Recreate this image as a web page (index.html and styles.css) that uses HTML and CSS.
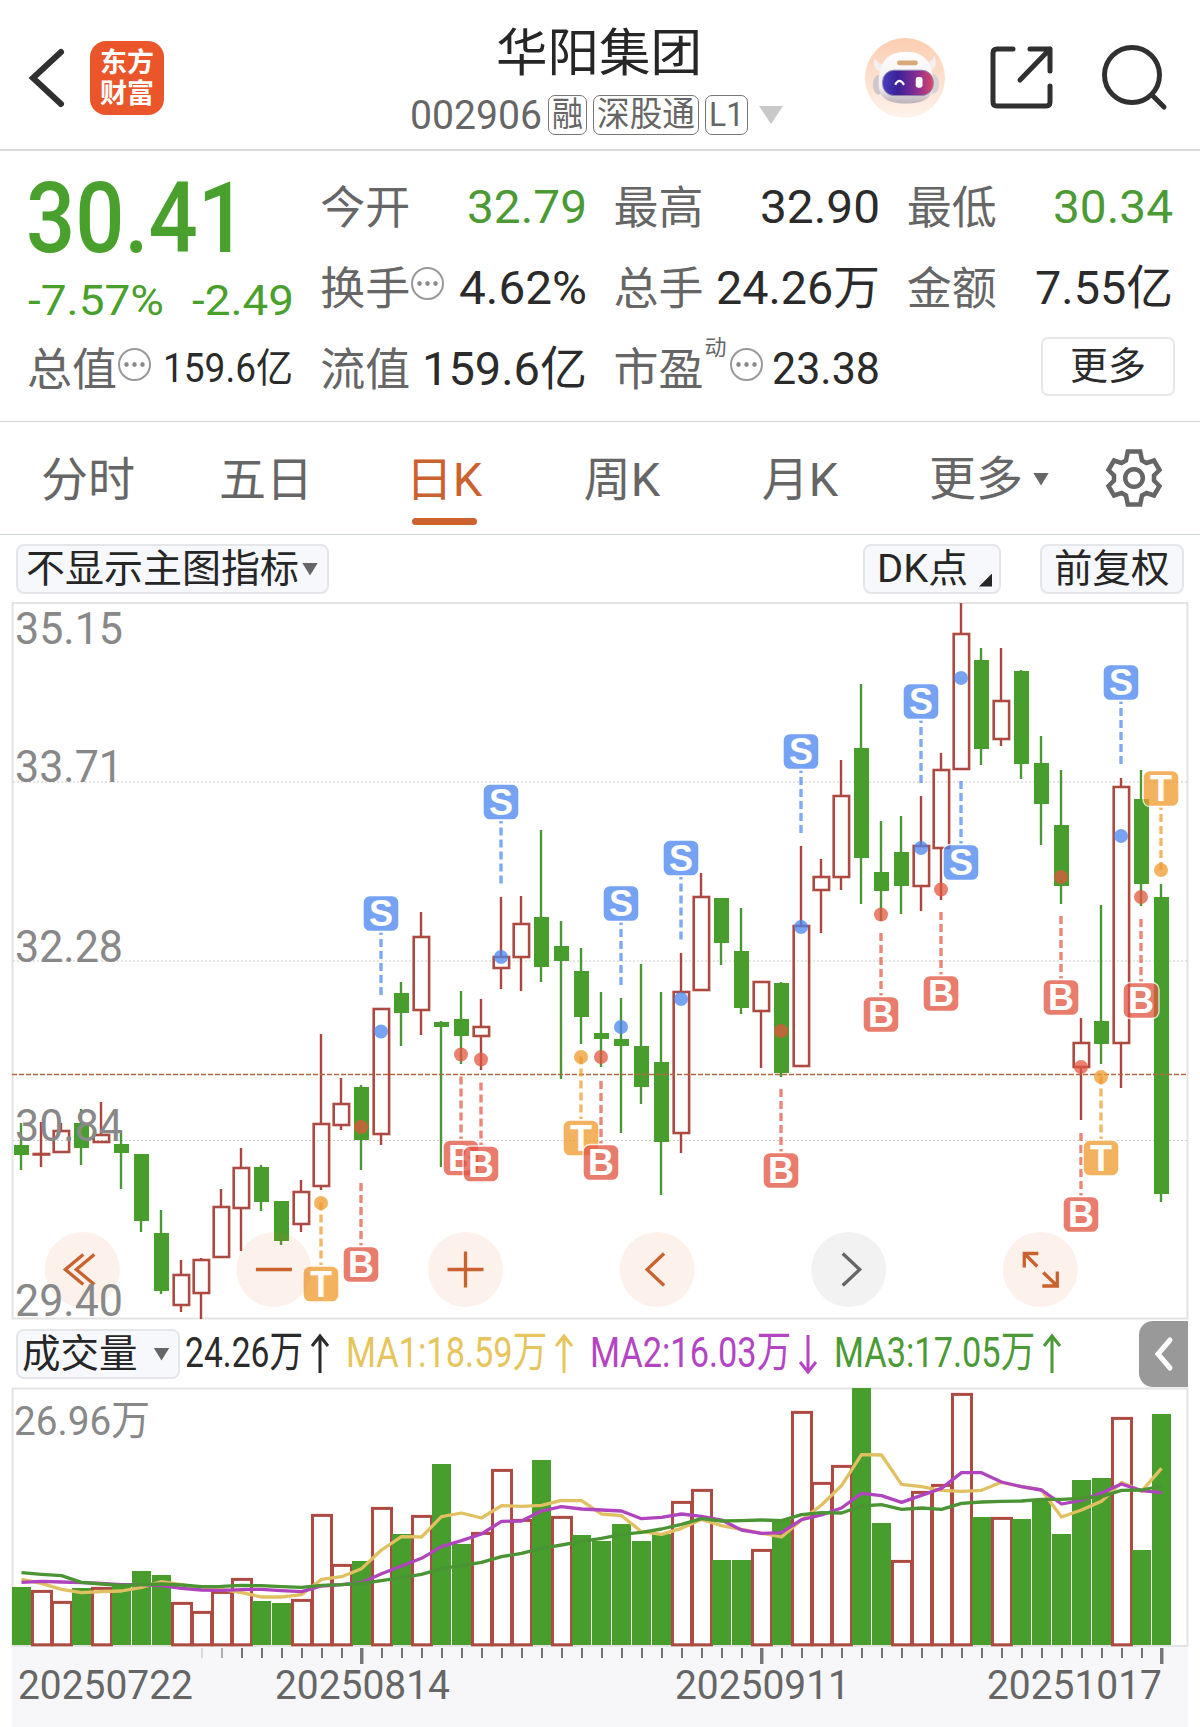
FILE: index.html
```html
<!DOCTYPE html>
<html lang="zh-CN">
  <head>
    <meta charset="UTF-8" />
    <meta name="viewport" content="width=device-width, initial-scale=1.0" />
    <title>华阳集团 002906</title>
    <link rel="stylesheet" href="styles.css">
  </head>
  <body>
    <header>
      <svg class="tilbage" width="40" height="64" viewBox="0 0 40 64"><path d="M34 6 L6 32 L34 58" /></svg>
      <div class="logo"><span>东方</span><span>财富</span></div>
      <div class="titel">
        <h1>华阳集团</h1>
        <div class="kode">
          <span class="fit nummer" data-w="132">002906</span>
          <span class="tag"><span class="fit" data-w="31">融</span></span>
          <span class="tag"><span class="fit" data-w="98">深股通</span></span>
          <span class="tag"><span class="fit" data-w="35">L1</span></span>
          <i class="pil lys"></i>
        </div>
      </div>
      <div class="ikoner">
        <svg width="82" height="82" viewBox="0 0 82 84">
          <defs>
            <linearGradient id="bg" x1="0" y1="0" x2="0" y2="1">
              <stop offset="0" stop-color="#fbcdb0" />
              <stop offset="1" stop-color="#fef3ec" />
            </linearGradient>
            <linearGradient id="visir" x1="0" y1="0" x2="1" y2="0">
              <stop offset="0" stop-color="#4a3fc0" />
              <stop offset="0.3" stop-color="#392196" />
              <stop offset="0.7" stop-color="#8d2f93" />
              <stop offset="1" stop-color="#dc4663" />
            </linearGradient>
            <linearGradient id="hjelm" x1="0" y1="0" x2="0" y2="1">
              <stop offset="0" stop-color="#ffffff" />
              <stop offset="0.7" stop-color="#f1edef" />
              <stop offset="1" stop-color="#b9b2b8" />
            </linearGradient>
          </defs>
          <circle cx="41" cy="42" r="41" fill="url(#bg)" />
          <path d="M10 21 Q7 34 16 35 L21 28 Q12 28 10 21 Z M71 19 Q76 32 66 35 L60 27 Q69 27 71 19 Z" fill="#f6eeee" />
          <ellipse cx="14" cy="49" rx="6" ry="10" fill="#cfc7cb" />
          <ellipse cx="70" cy="48" rx="6" ry="10" fill="#d9d2d5" />
          <path d="M14 47 C14 26 23 15 42 15 C61 15 69 26 70 46 C70 62 62 68 42 68 C22 68 14 62 14 47 Z" fill="url(#hjelm)" />
          <rect x="33" y="24" width="21" height="5" rx="2" fill="#d9a877" />
          <rect x="18" y="34" width="52" height="26" rx="12" fill="url(#visir)" stroke="#8e86ad" />
          <path d="M31 49 Q35 41 40 49" fill="none" stroke="#fff" stroke-width="2.2" />
          <rect x="52" y="41" width="7" height="11" rx="2.5" fill="#fff" />
        </svg>
        <svg class="streg" width="66" height="66" viewBox="0 0 66 66">
          <path d="M24 4 H8 Q4 4 4 8 V57 Q4 61 8 61 H57 Q61 61 61 57 V41" />
          <path d="M41 4 H61 V26 M61 4 L31 35" />
        </svg>
        <svg class="streg" width="68" height="68" viewBox="0 0 68 68">
          <circle cx="33" cy="32" r="27.5" />
          <path d="M53 52 L65 64" />
        </svg>
      </div>
    </header>

    <section class="kurs">
      <div class="pris">
        <div class="stor"><span class="fit" data-w="221">30.41</span></div>
        <div class="fald"><span class="fit" data-w="136">-7.57%</span><span class="fit" data-w="102">-2.49</span></div>
      </div>
      <div class="felt"><label>今开</label><b class="fit groen" data-w="120">32.79</b></div>
      <div class="felt"><label>最高</label><b class="fit" data-w="120">32.90</b></div>
      <div class="felt"><label>最低</label><b class="fit groen" data-w="120">30.34</b></div>
      <div class="felt"><label>换手</label><i class="info"></i><b class="fit" data-w="128">4.62%</b></div>
      <div class="felt"><label>总手</label><b class="fit" data-w="164">24.26万</b></div>
      <div class="felt"><label>金额</label><b class="fit" data-w="138">7.55亿</b></div>
      <div class="felt"><label>总值</label><i class="info"></i><b class="fit lille" data-w="130">159.6亿</b></div>
      <div class="felt"><label>流值</label><b class="fit" data-w="165">159.6亿</b></div>
      <div class="felt"><label>市盈</label><sup>动</sup><i class="info"></i><b class="fit mellem" data-w="108">23.38</b></div>
      <div class="felt"><button>更多</button></div>
    </section>

    <nav>
      <a>分时</a>
      <a>五日</a>
      <a class="valgt">日K</a>
      <a>周K</a>
      <a>月K</a>
      <a class="mere">更多<i class="pil"></i></a>
      <svg class="gear" width="60" height="62" viewBox="-30 -31 60 62">
        <path d="M-6.2 -26.5 H6.2 L8 -17.5 L12.5 -15 L20 -17.5 L25.5 -8 L20 -2.5 V2.5 L25.5 8 L20 17.5 L12.5 15 L8 17.5 L6.2 26.5 H-6.2 L-8 17.5 L-12.5 15 L-20 17.5 L-25.5 8 L-20 2.5 V-2.5 L-25.5 -8 L-20 -17.5 L-12.5 -15 L-8 -17.5 Z" />
        <circle r="8.8" />
      </svg>
    </nav>

    <div class="linje">
      <span class="knap hoved">不显示主图指标<i class="pil"></i></span>
      <span class="knap dk"><span class="fit" data-w="91">DK点</span><i class="hjoerne"></i></span>
      <span class="knap fq">前复权</span>
    </div>

    <svg id="kchart" width="1200" height="720" viewBox="0 600 1200 720"></svg>

    <div class="linje vol">
      <span class="knap volknap">成交量<i class="pil"></i></span>
      <span class="ma sort"><span class="fit" data-w="118">24.26万</span><svg viewBox="0 0 18 40"><path d="M9 39 V2 M1 12 L9 2 L17 12" /></svg></span>
      <span class="ma gul"><span class="fit" data-w="201">MA1:18.59万</span><svg viewBox="0 0 18 40"><path d="M9 39 V2 M1 12 L9 2 L17 12" /></svg></span>
      <span class="ma lilla"><span class="fit" data-w="201">MA2:16.03万</span><svg viewBox="0 0 18 40"><path d="M9 1 V38 M1 28 L9 38 L17 28" /></svg></span>
      <span class="ma groen"><span class="fit" data-w="201">MA3:17.05万</span><svg viewBox="0 0 18 40"><path d="M9 39 V2 M1 12 L9 2 L17 12" /></svg></span>
      <span class="fold"><svg width="20" height="36" viewBox="0 0 20 36"><path d="M16 4 L4 18 L16 32" /></svg></span>
    </div>

    <svg id="vchart" width="1200" height="339" viewBox="0 1388 1200 339"></svg>

    <script src="chart.js"></script>
  </body>
</html>
```

FILE: styles.css
```css
* {
  box-sizing: border-box;
}
body {
  margin: 0;
  width: 1200px;
  height: 1727px;
  overflow: hidden;
  background-color: white;
  color: #2b2b2b;
  font-family: Roboto, "Noto Sans CJK SC", sans-serif;
}
svg {
  display: block;
  flex: none;
  overflow: visible;
}
.fit {
  display: inline-block;
  white-space: nowrap;
  transform-origin: left center;
}
.groen {
  color: #4b9a35;
}

/*top*/
header {
  height: 151px;
  border-bottom: 2px solid #dadada;
  display: grid;
  grid-template-columns: 64px 74px 1fr 336px;
  column-gap: 26px;
  align-items: start;
}
.tilbage {
  margin: 46px 0 0 27px;
  fill: none;
  stroke: #303030;
  stroke-width: 6;
  stroke-linecap: round;
}
.logo {
  margin-top: 41px;
  width: 74px;
  height: 74px;
  border-radius: 16px;
  background-color: #eb552a;
  color: white;
  font-size: 27px;
  font-weight: 700;
  line-height: 31px;
  padding-top: 7px;
  display: flex;
  flex-direction: column;
  align-items: center;
}
.titel {
  display: flex;
  flex-direction: column;
  padding-top: 24px;
}
h1 {
  margin: 0 0 0 306px;
  font-size: 51.5px;
  font-weight: 400;
  line-height: 60px;
  color: #262626;
  white-space: nowrap;
}
.kode {
  display: flex;
  align-items: center;
  height: 62px;
  margin: 0 0 0 220px;
  color: #666;
  gap: 6px;
}
.nummer {
  font-size: 40px;
}
.tag {
  height: 40px;
  border: 1px solid #777;
  border-radius: 7px;
  padding: 0 3px;
  font-size: 34px;
  line-height: 36px;
}
.pil {
  flex: none;
  width: 16px;
  height: 13px;
  background-color: #666;
  clip-path: polygon(0 0, 100% 0, 50% 100%);
}
.pil.lys {
  width: 24px;
  height: 18px;
  margin-left: 5px;
  background-color: #c9c9c9;
}
.ikoner {
  display: flex;
  padding-top: 37px;
}
.streg {
  fill: none;
  stroke: #303030;
  stroke-width: 5;
  stroke-linecap: round;
  stroke-linejoin: round;
}
.ikoner .streg {
  margin: 8px 0 0 43px;
}
.ikoner .streg + .streg {
  margin: 6px 0 0 44px;
}

/*kurs*/
.kurs {
  height: 271px;
  padding: 15px 28px 0;
  border-bottom: 1px solid #d5d8d8;
  display: grid;
  grid-template-columns: repeat(4, 1fr);
  grid-template-rows: repeat(3, 81px);
  column-gap: 29px;
}
.pris {
  grid-row: span 2;
  color: #4aa02c;
}
.stor {
  height: 105px;
  line-height: 105px;
  font-size: 98px;
  font-weight: 500;
  margin-left: -2px;
}
.fald {
  display: flex;
  justify-content: space-between;
  margin-right: -2px;
  font-size: 43px;
  line-height: 58px;
}
.felt {
  display: flex;
  align-items: center;
  min-width: 0;
  white-space: nowrap;
  position: relative;
  left: -1px;
  margin-right: -2px;
}
.felt label {
  font-size: 45px;
  color: #666;
  line-height: 77px;
  padding-top: 4px;
}
.felt b {
  margin-left: auto;
  font-size: 47px;
  line-height: 54px;
  font-weight: 400;
}
.felt b.lille {
  font-size: 40px;
}
.felt b.mellem {
  font-size: 45px;
}
.felt sup {
  font-size: 22px;
  color: #666;
  line-height: 22px;
  margin: 0 2px 42px 1px;
}
.info {
  flex: none;
  width: 33px;
  height: 33px;
  margin-top: -8px;
  margin-left: 1px;
  border: 2px solid #999;
  border-radius: 50%;
  background: radial-gradient(circle, #888 2px, transparent 2.6px) 0 0 / 8px 29px repeat-x;
  background-position: 2.5px 0;
  background-clip: content-box;
  padding: 0 2px;
}
.felt button {
  margin-left: auto;
  margin-right: -2px;
  margin-top: -4px;
  width: 134px;
  height: 59px;
  border: 2px solid #e6e8e8;
  border-radius: 7px;
  background-color: white;
  color: #2b2b2b;
  font: inherit;
  font-size: 38px;
  line-height: 48px;
  padding: 0 0 2px;
}

/*faner*/
nav {
  height: 113px;
  border-bottom: 1px solid #d0d5d5;
  display: flex;
  align-items: flex-start;
}
nav a {
  width: 178px;
  height: 103px;
  font-size: 47px;
  line-height: 116px;
  text-align: center;
  text-indent: -2px;
  color: #666;
}
nav .valgt {
  color: #c9622f;
  display: flex;
  flex-direction: column;
  align-items: center;
}
nav .valgt::after {
  content: "";
  width: 65px;
  height: 8px;
  margin: -20px 2px 0 0;
  border-radius: 4px;
  background-color: #cf6130;
}
nav .mere {
  display: flex;
  align-items: center;
  gap: 10px;
  width: 174px;
  height: 114px;
  margin-left: 41px;
}
.gear {
  margin: 25px 0 0 -1px;
  fill: none;
  stroke: #666;
  stroke-width: 4.5;
}

/*knapper*/
.linje {
  height: 65px;
  padding-left: 16px;
  display: flex;
}
.knap {
  display: flex;
  align-items: center;
  height: 50px;
  margin-top: 9px;
  border: 2px solid #e4e6e9;
  border-radius: 8px;
  background-color: #f7f8fb;
  font-size: 39px;
  line-height: 44px;
  color: #262626;
  white-space: nowrap;
}
.hoved {
  width: 313px;
  padding-left: 8px;
}
.hoved .pil {
  margin-left: 3px;
}
.dk {
  width: 138px;
  margin-left: auto;
  padding-left: 12px;
}
.hjoerne {
  width: 13px;
  height: 13px;
  margin: 22px 0 0 11px;
  background-color: #262626;
  clip-path: polygon(100% 0, 100% 100%, 0 100%);
}
.fq {
  width: 144px;
  margin: 9px 16px 0 39px;
  padding-left: 12px;
  font-size: 38.5px;
}
.vol {
  height: 68px;
}
.volknap {
  width: 164px;
  padding-left: 4px;
  font-size: 38.5px;
}
.volknap .pil {
  margin-left: 16px;
}
.ma {
  display: flex;
  align-items: center;
  height: 64px;
  margin-left: 17px;
  font-size: 43px;
  line-height: 64px;
}
.ma svg {
  width: 18px;
  height: 40px;
  margin: 4px 0 0 8px;
  fill: none;
  stroke: currentColor;
  stroke-width: 3;
}
.ma.sort {
  margin-left: 5px;
}
.ma.gul {
  color: #e5c55c;
}
.ma.lilla {
  color: #b445c2;
}
.fold {
  display: flex;
  align-items: center;
  justify-content: center;
  width: 49px;
  height: 66px;
  margin: 1px 12px 0 auto;
  border-radius: 14px 0 0 14px;
  background-color: #999;
}
.fold path {
  fill: none;
  stroke: white;
  stroke-width: 5;
  stroke-linecap: round;
}

/*grafer*/
.ramme {
  fill: none;
  stroke: #e3e3e3;
  stroke-width: 2;
}
.gitter {
  stroke: #ccc;
  stroke-width: 1;
  stroke-dasharray: 2 2;
}
.nu {
  stroke: #b5683f;
  stroke-width: 1.4;
  stroke-dasharray: 5 2;
}
.ned {
  fill: #489e2c;
}
.op {
  fill: none;
  stroke: #ad4a42;
  stroke-width: 2.6;
}
.vaege-ned,
.vaege-op {
  stroke: #4b9735;
  stroke-width: 2.4;
}
.vaege-op {
  stroke: #a9463f;
}
.akse {
  fill: #888;
  font-size: 44px;
}
.dato {
  fill: #666;
  font-size: 41px;
}
.maerke {
  fill: white;
  font-family: "Liberation Sans", sans-serif;
  font-weight: 700;
  font-size: 36px;
  text-anchor: middle;
}
.tegn {
  fill: none;
  stroke: #c9622f;
  stroke-width: 3.3;
}
.snit {
  fill: none;
  stroke-width: 3.3;
  stroke-linejoin: round;
}
```

FILE: chart.js
```js
// squeeze texts to their column width
document.querySelectorAll(".fit").forEach((el) => {
  const w = Number(el.dataset.w);
  const natural = el.getBoundingClientRect().width;
  el.style.transform = `scaleX(${w / natural})`;
  el.style.marginRight = w - natural + "px";
});

const x = (i) => 21 + i * 20;

// g = down, r = up: [type, high, top, bottom, low]
const candles = [
  ["g", 1123, 1145, 1155, 1170], ["r", 1122, 1153, 1154, 1167], ["r", 1123, 1130, 1153, 1153],
  ["g", 1109, 1123, 1148, 1165], ["r", 1102, 1134, 1143, 1143], ["g", 1131, 1144, 1153, 1189],
  ["g", 1154, 1154, 1221, 1232], ["g", 1210, 1233, 1291, 1294], ["r", 1260, 1274, 1306, 1312],
  ["r", 1258, 1259, 1294, 1319], ["r", 1189, 1206, 1258, 1258], ["r", 1148, 1167, 1209, 1251],
  ["g", 1165, 1167, 1202, 1211], ["g", 1201, 1201, 1241, 1245], ["r", 1180, 1191, 1225, 1232],
  ["r", 1034, 1123, 1187, 1190], ["r", 1078, 1103, 1126, 1130], ["g", 1085, 1087, 1140, 1170],
  ["r", 1008, 1008, 1135, 1145], ["g", 982, 993, 1013, 1046], ["r", 912, 936, 1011, 1035],
  ["g", 1021, 1022, 1027, 1167], ["g", 991, 1019, 1036, 1064], ["r", 999, 1026, 1037, 1070],
  ["r", 897, 956, 969, 989], ["r", 896, 923, 958, 991], ["g", 830, 917, 967, 982],
  ["g", 921, 946, 961, 1079], ["g", 948, 971, 1017, 1044], ["g", 992, 1033, 1039, 1067],
  ["g", 998, 1039, 1046, 1133], ["g", 964, 1046, 1087, 1104], ["g", 992, 1062, 1142, 1195],
  ["r", 953, 991, 1134, 1153], ["r", 873, 896, 991, 991], ["g", 898, 898, 943, 965],
  ["g", 908, 951, 1008, 1014], ["r", 981, 981, 1012, 1068], ["g", 982, 983, 1073, 1077],
  ["r", 846, 925, 1067, 1067], ["r", 859, 876, 891, 933], ["r", 760, 795, 878, 890],
  ["g", 684, 748, 858, 904], ["g", 821, 872, 891, 921], ["g", 816, 852, 886, 914],
  ["r", 796, 845, 887, 911], ["r", 753, 769, 849, 900], ["r", 603, 633, 770, 770],
  ["g", 648, 660, 749, 765], ["r", 648, 700, 740, 746], ["g", 670, 671, 764, 779],
  ["g", 736, 763, 804, 845], ["g", 770, 825, 886, 904], ["r", 1018, 1042, 1068, 1120],
  ["g", 905, 1021, 1044, 1064], ["r", 778, 786, 1044, 1088], ["g", 770, 799, 884, 906],
  ["g", 884, 897, 1194, 1202],
];

// [index, letter, badge y, dot y]
const marks = [
  [15, "T", 1284, 1203], [17, "B", 1264.5, 1127], [18, "S", 913.5, 1031.5],
  [22, "B", 1158, 1054.5], [23, "B", 1164, 1059.5], [24, "S", 802, 957],
  [28, "T", 1138, 1057], [29, "B", 1162.5, 1057], [30, "S", 903.5, 1027],
  [33, "S", 858, 999], [38, "B", 1170.5, 1031], [39, "S", 751.5, 927],
  [43, "B", 1014.5, 914.5], [45, "S", 701.5, 848], [46, "B", 993.5, 889.5],
  [47, "S", 862.5, 678], [52, "B", 997.5, 877], [53, "B", 1214.5, 1067],
  [54, "T", 1158, 1077], [55, "S", 682.5, 836], [56, "B", 1000.5, 897],
  [57, "T", 788.5, 870],
];
const farver = { S: "#4a86ee", B: "#e25540", T: "#f09a2c" };

let k = `<rect class="ramme" x="12.5" y="603" width="1175" height="715.5"/>`;
[782, 961, 1140.5].forEach((y) => {
  k += `<line class="gitter" x1="13" x2="1187" y1="${y}" y2="${y}"/>`;
});
candles.forEach(([type, high, top, bottom, low], i) => {
  const cx = x(i);
  if (type == "g") {
    k += `<line class="vaege-ned" x1="${cx}" x2="${cx}" y1="${high}" y2="${low}"/>`;
    k += `<rect class="ned" x="${cx - 7}" y="${top}" width="15" height="${bottom - top}"/>`;
  } else {
    k += `<path class="vaege-op" d="M${cx} ${high} V${top} M${cx} ${bottom} V${low}"/>`;
    k += `<rect class="op" x="${cx - 7.3}" y="${top + 1}" width="15.4" height="${Math.max(bottom - top - 2, 0.5)}"/>`;
  }
});
k += `<line class="nu" x1="12" x2="1187" y1="1074.5" y2="1074.5"/>`;
marks.forEach(([i, bogstav, by, dy]) => {
  const cx = x(i);
  const retning = by > dy ? -1 : 1;
  const c = farver[bogstav];
  k += `<circle cx="${cx}" cy="${dy}" r="7" fill="${c}" opacity="0.75"/>`;
  k += `<line x1="${cx}" x2="${cx}" y1="${by + retning * 81.5}" y2="${by + retning * 19}" stroke="${c}" stroke-width="3.4" stroke-dasharray="8 4" opacity="0.7"/>`;
  k += `<rect x="${cx - 18}" y="${by - 18}" width="36" height="36" rx="7" fill="${c}" stroke="#fff" stroke-width="1.4" opacity="0.76"/>`;
  k += `<text class="maerke" x="${cx}" y="${by + 12.5}">${bogstav}</text>`;
});

// round buttons
const tegn = [
  "M1 -15 L-17 0 L1 15 M12 -15 L-6 0 L12 15",
  "M-18 0 H18",
  "M-18 0 H18 M0 -18 V18",
  "M7 -16 L-10 0 L7 16",
  "M-6 -16 L11 0 L-6 16",
  "M-16 -2 V-16 H-2 M-16 -16 L-3 -3 M17 2 V16.5 H2 M17 16.5 L3 3",
];
tegn.forEach((d, i) => {
  const graa = i == 4;
  k += `<g transform="translate(${82.3 + i * 191.6} 1269.5)">
    <circle r="37.5" fill="${graa ? "#808080" : "#dd7837"}" opacity="0.1"/>
    <path class="tegn" d="${d}" ${graa ? 'style="stroke: #666"' : ""}/></g>`;
});
[["35.15", 644], ["33.71", 782], ["32.28", 962], ["30.84", 1141], ["29.40", 1315.5]].forEach(([t, y]) => {
  k += `<text class="akse" x="15" y="${y}" textLength="108" lengthAdjust="spacingAndGlyphs">${t}</text>`;
});
document.querySelector("#kchart").innerHTML = k;

// volume, top of every bar
const toppe = [
  1587, 1590, 1601, 1588, 1587, 1585, 1571, 1575, 1602, 1611, 1591, 1578, 1601, 1603, 1599,
  1514, 1564, 1561, 1507, 1534, 1515, 1464, 1544, 1532, 1469, 1519, 1460, 1516, 1535, 1541,
  1524, 1541, 1534, 1501, 1489, 1560, 1560, 1549, 1520, 1411, 1482, 1465, 1388, 1523, 1560,
  1491, 1484, 1393, 1517, 1517, 1519, 1499, 1534, 1480, 1478, 1417, 1550, 1414,
];
// days where the bar has the opposite colour of the candle
const omvendt = [27, 44, 53];
const ma = {
  "#e0c060": [
    808, 820, 838, 848, 845, 843, 832, 815, 824, 834, 838, 848, 861, 861, 854, 808, 800, 776, 720, 680,
    681, 620, 609, 624, 587, 589, 586, 571, 572, 612, 617, 665, 673, 655, 628, 647, 658, 670, 681, 630,
    585, 527, 434, 435, 523, 530, 541, 544, 541, 517, 530, 540, 621, 600, 574, 517, 544, 475,
  ],
  "#b044be": [
    817, 814, 816, 818, 820, 824, 824, 827, 835, 840, 841, 839, 838, 842, 845, 828, 824, 818, 791, 768,
    745, 710, 692, 672, 634, 633, 603, 590, 597, 600, 603, 626, 622, 612, 619, 630, 660, 670, 668, 629,
    615, 594, 550, 557, 577, 556, 535, 488, 488, 516, 530, 540, 582, 571, 549, 522, 542, 548,
  ],
  "#4a9434": [
    788, 793, 797, 817, 822, 826, 824, 822, 825, 830, 829, 826, 827, 830, 832, 826, 824, 820, 812, 803,
    793, 776, 767, 757, 740, 730, 715, 705, 694, 685, 673, 667, 657, 643, 626, 633, 632, 630, 632, 614,
    608, 609, 588, 584, 598, 594, 598, 580, 576, 574, 573, 568, 568, 565, 560, 541, 540, 528,
  ],
};

let v = `<rect x="12" y="1647" width="1176" height="80" fill="#f7f7fa"/>`;
v += `<rect class="ramme" x="12.5" y="1388.5" width="1175" height="257.5"/>`;
toppe.forEach((top, i) => {
  const cx = x(i) + 0.5;
  if ((candles[i][0] == "g") != omvendt.includes(i)) {
    v += `<rect class="ned" x="${cx - 9.5}" y="${top}" width="19" height="${1645 - top}"/>`;
  } else {
    v += `<rect class="op" style="stroke-width: 3" x="${cx - 9}" y="${top + 1.4}" width="19" height="${1643.4 - top}"/>`;
  }
});
for (const farve in ma) {
  const punkter = ma[farve].map((p, i) => `${x(i) + 0.5},${1310 + p / 3}`).join(" ");
  v += `<polyline class="snit" stroke="${farve}" points="${punkter}"/>`;
}
for (let i = 9; i < 58; i++) {
  const stor = i % 20 == 17;
  v += `<rect x="${x(i) - (stor ? 1 : 0)}" y="1648" width="${stor ? 3.5 : 2}" height="${stor ? 16 : 10}" fill="#666" opacity="${i == 9 ? 0.2 : i == 10 ? 0.5 : 0.9}"/>`;
}
v += `<text class="akse" style="font-size: 41px" x="14" y="1434.5" textLength="136" lengthAdjust="spacingAndGlyphs">26.96万</text>`;
[["20250722", 18], ["20250814", 275], ["20250911", 675], ["20251017", 987]].forEach(([t, tx]) => {
  v += `<text class="dato" x="${tx}" y="1699" textLength="175" lengthAdjust="spacingAndGlyphs">${t}</text>`;
});
document.querySelector("#vchart").innerHTML = v;
```
